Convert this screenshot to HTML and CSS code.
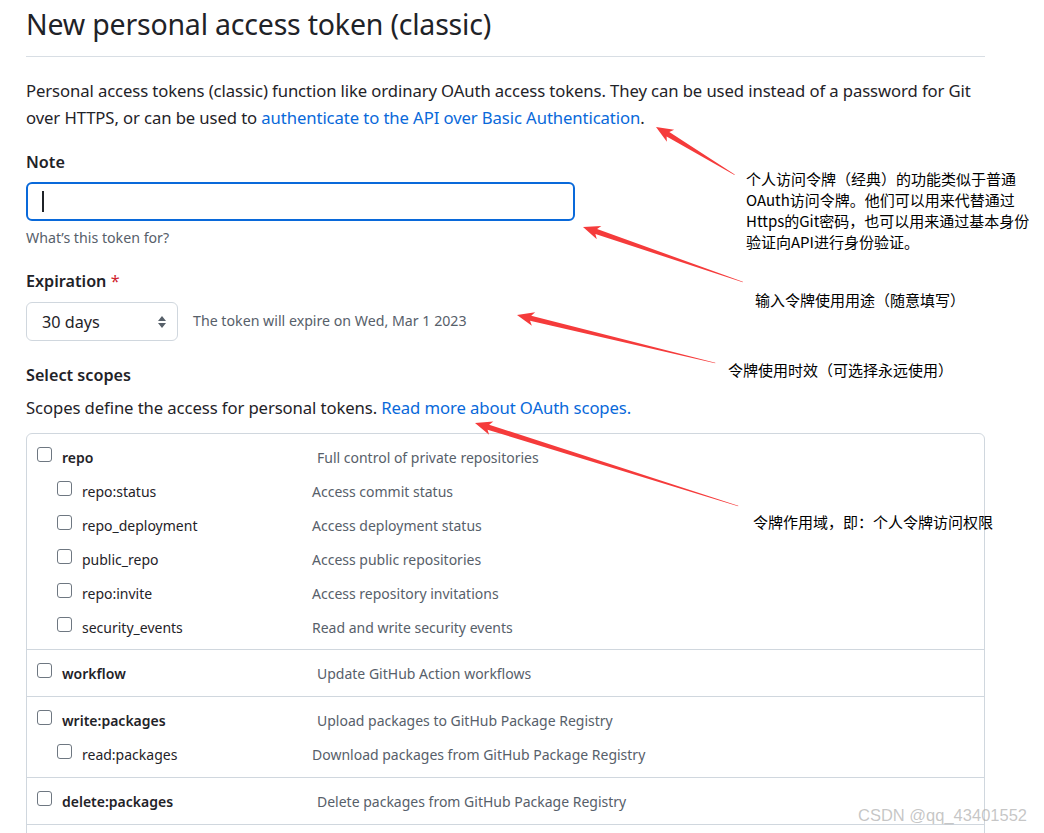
FILE: index.html
```html
<!DOCTYPE html>
<html lang="en">
<head>
<meta charset="utf-8">
<title>New personal access token (classic)</title>
<link rel="stylesheet" href="styles.css">
</head>
<body>
<div class="page">
  <h1 class="title">New personal access token (classic)</h1>
  <p class="intro">Personal access tokens (classic) function like ordinary OAuth access tokens. They can be used instead of a password for Git over HTTPS, or can be used to <a class="link" href="#">authenticate to the API over Basic Authentication</a>.</p>

  <div class="label label-note">Note</div>
  <div class="input"><span class="caret"></span></div>
  <div class="hint">What’s this token for?</div>

  <div class="label label-exp">Expiration <span class="req">*</span></div>
  <div class="exp-row">
    <div class="select">
      <span>30 days</span>
      <svg class="sel-icon" width="10" height="14" viewBox="0 0 10 14"><path d="M5 1 L9 6 L1 6 Z M5 13 L9 8 L1 8 Z" fill="#57606a"/></svg>
    </div>
    <span class="exp-note">The token will expire on Wed, Mar 1 2023</span>
  </div>

  <div class="label label-scopes">Select scopes</div>
  <p class="scopes-desc">Scopes define the access for personal tokens. <a class="link" href="#">Read more about OAuth scopes.</a></p>

  <div class="scopes">
    <div class="group group-first">
      <div class="row top"><span class="cb"></span><span class="name">repo</span><span class="desc">Full control of private repositories</span></div>
      <div class="row sub"><span class="cb"></span><span class="name">repo:status</span><span class="desc">Access commit status</span></div>
      <div class="row sub"><span class="cb"></span><span class="name">repo_deployment</span><span class="desc">Access deployment status</span></div>
      <div class="row sub"><span class="cb"></span><span class="name">public_repo</span><span class="desc">Access public repositories</span></div>
      <div class="row sub"><span class="cb"></span><span class="name">repo:invite</span><span class="desc">Access repository invitations</span></div>
      <div class="row sub"><span class="cb"></span><span class="name">security_events</span><span class="desc">Read and write security events</span></div>
    </div>
    <div class="group">
      <div class="row top"><span class="cb"></span><span class="name">workflow</span><span class="desc">Update GitHub Action workflows</span></div>
    </div>
    <div class="group">
      <div class="row top"><span class="cb"></span><span class="name">write:packages</span><span class="desc">Upload packages to GitHub Package Registry</span></div>
      <div class="row sub"><span class="cb"></span><span class="name">read:packages</span><span class="desc">Download packages from GitHub Package Registry</span></div>
    </div>
    <div class="group">
      <div class="row top"><span class="cb"></span><span class="name">delete:packages</span><span class="desc">Delete packages from GitHub Package Registry</span></div>
    </div>
    <div class="group group-empty"></div>
  </div>
</div>

<svg class="arrows" width="1044" height="833" viewBox="0 0 1044 833">
  <g fill="#f53b3b">
    <polygon transform="translate(656 127) rotate(31.3)" points="0,0 17,-7 14,-2.6 92,-0.3 92,0.3 14,2.6 17,7"/>
    <polygon transform="translate(583 227) rotate(18.97)" points="0,0 17,-7 14,-2.6 169,-0.3 169,0.3 14,2.6 17,7"/>
    <polygon transform="translate(517 315) rotate(13.63)" points="0,0 17,-7 14,-2.6 204,-0.3 204,0.3 14,2.6 17,7"/>
    <polygon transform="translate(475 423) rotate(17.51)" points="0,0 17,-7 14,-2.6 276,-0.3 276,0.3 14,2.6 17,7"/>
  </g>
</svg>

<div class="note note1">个人访问令牌（经典）的功能类似于普通<br>OAuth访问令牌。他们可以用来代替通过<br>Https的Git密码，也可以用来通过基本身份<br>验证向API进行身份验证。</div>
<div class="note note2">输入令牌使用用途（随意填写）</div>
<div class="note note3">令牌使用时效（可选择永远使用）</div>
<div class="note note4">令牌作用域，即：个人令牌访问权限</div>

<div class="watermark">CSDN @qq_43401552</div>
</body>
</html>
```

FILE: styles.css
```css
html, body {
  margin: 0;
  padding: 0;
  background: #ffffff;
}
body {
  width: 1044px;
  height: 833px;
  overflow: hidden;
  position: relative;
  font-family: "Noto Sans", "Open Sans", sans-serif;
  color: #1f2328;
}
.page {
  width: 959px;
  margin-left: 26px;
}
.title {
  margin: 0;
  font-size: 28.5px;
  font-weight: 400;
  line-height: 48px;
  padding-bottom: 8px;
  border-bottom: 1px solid #d8dee4;
  letter-spacing: -0.2px;
}
.intro {
  margin: 20px 0 0;
  font-size: 16.7px;
  line-height: 27px;
  letter-spacing: -0.1px;
}
.link {
  color: #0969da;
  text-decoration: none;
}
.label {
  font-size: 16.2px;
  font-weight: 600;
  line-height: 24px;
}
.label-note { margin-top: 19px; }
.label-exp { margin-top: 21px; }
.label-scopes { margin-top: 22px; }
.req { color: #cf222e; font-weight: 400; }
.input {
  margin-top: 8px;
  width: 549px;
  height: 39px;
  box-sizing: border-box;
  border: 2px solid #0969da;
  border-radius: 6px;
  display: flex;
  align-items: center;
  padding-left: 14px;
}
.caret {
  width: 1.5px;
  height: 21px;
  background: #1f2328;
}
.hint {
  margin-top: 7px;
  font-size: 14.2px;
  line-height: 20px;
  color: #57606a;
}
.exp-row {
  margin-top: 9px;
  display: flex;
  align-items: center;
  gap: 15px;
}
.select {
  width: 152px;
  height: 39px;
  box-sizing: border-box;
  border: 1px solid #d0d7de;
  border-radius: 6px;
  display: flex;
  align-items: center;
  justify-content: space-between;
  padding: 0 10px 0 15px;
  font-size: 16.2px;
}
.sel-icon { display: block; }
.exp-note {
  font-size: 14.2px;
  color: #57606a;
  position: relative;
  top: -1px;
}
.scopes-desc {
  margin: 9px 0 0;
  font-size: 16.7px;
  line-height: 24px;
  letter-spacing: -0.1px;
}
.scopes {
  margin-top: 13px;
  border: 1px solid #d0d7de;
  border-radius: 6px;
}
.group {
  padding: 6px 0 6px;
  border-bottom: 1px solid #d0d7de;
}
.group-first { padding-bottom: 5px; }
.group-empty { height: 20px; padding: 0; border-bottom: none; }
.row {
  display: flex;
  align-items: center;
  height: 34px;
  font-size: 14px;
}
.row.top { padding-left: 10px; }
.row.sub { padding-left: 30px; }
.cb {
  width: 15px;
  height: 15px;
  box-sizing: border-box;
  border: 1.5px solid #6e7781;
  border-radius: 3px;
  flex: none;
  position: relative;
  top: -3px;
  background: #fff;
}
.name {
  margin-left: 10px;
  color: #1f2328;
}
.row.top .name { width: 255px; font-weight: 600; }
.row.sub .name { width: 230px; }
.desc { color: #57606a; }

.arrows {
  position: absolute;
  left: 0;
  top: 0;
  pointer-events: none;
}
.note {
  position: absolute;
  font-family: "Noto Sans CJK SC", "Noto Sans", sans-serif;
  font-size: 15px;
  line-height: 21px;
  color: #000;
  white-space: nowrap;
}
.note1 { left: 746px; top: 168px; }
.note2 { left: 755px; top: 289px; }
.note3 { left: 728px; top: 359px; }
.note4 { left: 753px; top: 511px; }
.watermark {
  position: absolute;
  left: 858px;
  top: 804px;
  font-family: "Liberation Sans", Arial, sans-serif;
  font-size: 16.5px;
  line-height: 22px;
  color: rgba(160, 160, 160, 0.6);
  white-space: nowrap;
}
```
